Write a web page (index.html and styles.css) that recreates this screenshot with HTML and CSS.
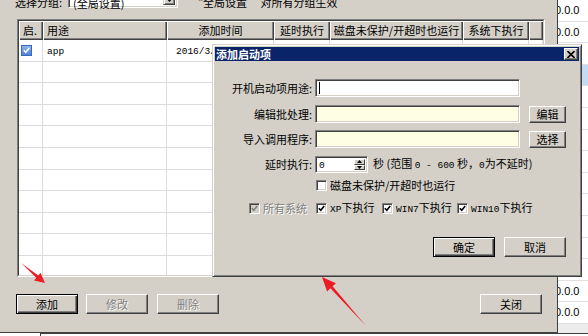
FILE: index.html
```html
<!DOCTYPE html>
<html lang="zh-CN">
<head>
  <meta charset="UTF-8" />
  <meta name="viewport" content="width=device-width, initial-scale=1.0"/>
  <title>开机启动项</title>
  <link rel="stylesheet" href="styles.css">
</head>
<body>
  <div class="desk">
    <div class="main">
      <div class="group-row">
        <span class="group-label">选择分组:</span>
        <div class="combo">
          <span class="combo-text">(全局设置)</span>
          <span class="combo-btn"><svg width="7" height="4" viewBox="0 0 7 4"><path d="M0 0h7L3.5 4z"/></svg></span>
        </div>
        <span class="group-note">“全局设置” 对所有分组生效</span>
      </div>

      <div class="list">
        <div class="list-in">
          <table class="grid">
            <colgroup>
              <col style="width:24px"><col style="width:124px"><col style="width:107px"><col style="width:56px"><col style="width:133px"><col style="width:66px"><col style="width:14px">
            </colgroup>
            <thead>
              <tr><th class="left">启.</th><th class="left">用途</th><th>添加时间</th><th>延时执行</th><th>磁盘未保护/开超时也运行</th><th>系统下执行</th><th></th></tr>
            </thead>
            <tbody>
              <tr>
                <td class="first"><span class="xpcheck"><svg width="7" height="7" viewBox="0 0 7 7"><path d="M0.8 3.2L2.8 5.2L6.2 1" fill="none" stroke="#fff" stroke-width="1.6"/></svg></span></td>
                <td><span class="en">app</span></td>
                <td class="date"><span class="en">2016/3/</span></td>
                <td></td><td></td><td></td><td></td>
              </tr>
              <tr><td></td><td></td><td></td><td></td><td></td><td></td><td></td></tr>
              <tr><td></td><td></td><td></td><td></td><td></td><td></td><td></td></tr>
              <tr><td></td><td></td><td></td><td></td><td></td><td></td><td></td></tr>
              <tr><td></td><td></td><td></td><td></td><td></td><td></td><td></td></tr>
              <tr><td></td><td></td><td></td><td></td><td></td><td></td><td></td></tr>
              <tr><td></td><td></td><td></td><td></td><td></td><td></td><td></td></tr>
              <tr><td></td><td></td><td></td><td></td><td></td><td></td><td></td></tr>
              <tr><td></td><td></td><td></td><td></td><td></td><td></td><td></td></tr>
              <tr><td></td><td></td><td></td><td></td><td></td><td></td><td></td></tr>
              <tr><td></td><td></td><td></td><td></td><td></td><td></td><td></td></tr>
            </tbody>
          </table>
        </div>
      </div>

      <div class="bottom-bar">
        <button class="btn default add">添加</button>
        <button class="btn edit" disabled>修改</button>
        <button class="btn del" disabled>删除</button>
        <button class="btn close-main">关闭</button>
      </div>
    </div>

    <div class="side">
      <div class="side-row">0.0.0</div>
      <div class="side-row">0.0.0</div>
      <div class="side-row"></div>
      <div class="side-row sel"></div>
      <div class="side-row"></div>
      <div class="side-row"></div>
      <div class="side-row"></div>
      <div class="side-row"></div>
      <div class="side-row"></div>
      <div class="side-row"></div>
      <div class="side-row"></div>
      <div class="side-row"></div>
      <div class="side-row"></div>
      <div class="side-row">0.0.0</div>
      <div class="side-row">0.0.0</div>
      <div class="side-row last"></div>
    </div>
  </div>
  <div class="strip"><span class="strip-left"></span><span class="strip-right"></span></div>

  <!-- 添加启动项 dialog -->
  <div class="dialog">
    <div class="titlebar">
      <span class="title">添加启动项</span>
      <span class="xbtn"><svg width="8" height="7" viewBox="0 0 8 7"><path d="M0.5 0L7.5 7M7.5 0L0.5 7" stroke="#000" stroke-width="1.6"/></svg></span>
    </div>
    <div class="form">
      <div class="row r1">
        <span class="lbl">开机启动项用途:</span>
        <div class="field"><i class="caret"></i></div>
      </div>
      <div class="row r2">
        <span class="lbl">编辑批处理:</span>
        <div class="field yellow"></div>
        <button class="btn small">编辑</button>
      </div>
      <div class="row r3">
        <span class="lbl">导入调用程序:</span>
        <div class="field yellow"></div>
        <button class="btn small">选择</button>
      </div>
      <div class="row r4">
        <span class="lbl">延时执行:</span>
        <div class="spin">
          <span class="en spin-val">0</span>
          <span class="spin-btns">
            <b><svg width="5" height="3" viewBox="0 0 5 3"><path d="M2.5 0L5 3H0z"/></svg></b>
            <b><svg width="5" height="3" viewBox="0 0 5 3"><path d="M0 0h5L2.5 3z"/></svg></b>
          </span>
        </div>
        <span class="hint">秒 (范围 <span class="en">0 - 600</span> 秒，<span class="en">0</span>为不延时)</span>
      </div>
      <div class="row r5">
        <span class="lbl"></span>
        <label class="chk first-chk"><span class="box"></span><span>磁盘未保护/开超时也运行</span></label>
      </div>
      <div class="row r6">
        <span class="lbl">
          <label class="chk off"><span class="box"><svg width="7" height="7" viewBox="0 0 7 7"><path d="M0.8 3.2L2.8 5.2L6.2 1" fill="none" stroke="#808080" stroke-width="1.6"/></svg></span><span>所有系统</span></label>
        </span>
        <label class="chk xp"><span class="box"><svg width="7" height="7" viewBox="0 0 7 7"><path d="M0.8 3.2L2.8 5.2L6.2 1" fill="none" stroke="#000" stroke-width="1.6"/></svg></span><span><span class="en">XP</span>下执行</span></label>
        <label class="chk w7"><span class="box"><svg width="7" height="7" viewBox="0 0 7 7"><path d="M0.8 3.2L2.8 5.2L6.2 1" fill="none" stroke="#000" stroke-width="1.6"/></svg></span><span><span class="en">WIN7</span>下执行</span></label>
        <label class="chk w10"><span class="box"><svg width="7" height="7" viewBox="0 0 7 7"><path d="M0.8 3.2L2.8 5.2L6.2 1" fill="none" stroke="#000" stroke-width="1.6"/></svg></span><span><span class="en">WIN10</span>下执行</span></label>
      </div>
      <div class="row actions">
        <button class="btn default">确定</button>
        <button class="btn">取消</button>
      </div>
    </div>
  </div>

  <!-- red arrows drawn over the screenshot -->
  <svg class="marks" width="588" height="336" viewBox="0 0 588 336">
    <path d="M21 263L38.3 275.4L40.5 272.8L45 283L34.1 280.5L36.3 277.8Z" fill="#ec1c24"/>
    <path d="M366 326L332.6 286.3L335.9 283.2L322 277L327.1 291.4L330.4 288.3Z" fill="#ec1c24"/>
  </svg>
</body>
</html>
```

FILE: styles.css
```css
* {
  box-sizing: border-box;
}

body {
  margin: 0;
  width: 588px;
  height: 336px;
  overflow: hidden;
  position: relative;
  background: #fff;
  font-family: "Noto Sans CJK SC", sans-serif;
  font-size: 11px;
  line-height: 1;
  color: #000;
}

.en {
  font-family: "Liberation Mono", monospace;
  font-size: 9.5px;
}

.desk {
  display: flex;
  height: 333px;
}

/* main window ============================ */
.main {
  width: 558px;
  flex: none;
  background: #d4d0c8;
  border-right: 1px solid #404040;
  border-bottom: 1px solid #404040;
  padding: 0 14px 0 15px;
  display: flex;
  flex-direction: column;
}

.group-row {
  height: 20px;
  margin-top: -12px;
  display: flex;
  align-items: center;
}

.group-label {
  width: 53px;
  padding-top: 9px;
}

.combo {
  width: 110px;
  height: 20px;
  display: flex;
  background: #fff;
  border: 1px solid;
  border-color: #808080 #fff #fff #808080;
  box-shadow: inset 1px 1px #404040, inset -1px -1px #d4d0c8;
  padding: 2px;
}

.combo-text {
  flex: 1;
  padding: 7px 0 0 2px;
}

.combo-btn {
  width: 12px;
  display: flex;
  align-items: center;
  justify-content: center;
  background: #d4d0c8;
  border: 1px solid;
  border-color: #d4d0c8 #404040 #404040 #d4d0c8;
  box-shadow: inset 1px 1px #fff, inset -1px -1px #808080;
  padding-top: 4px;
}

.group-note {
  margin-left: 14px;
  padding-top: 9px;
}

.list {
  margin: 11px -2px 0 2px;
  height: 258px;
  border: 1px solid;
  border-color: #808080 #fff #fff #808080;
}

.list-in {
  height: 100%;
  border: 1px solid;
  border-color: #404040 #d4d0c8 #d4d0c8 #404040;
  background: #fff;
  overflow: hidden;
}

.grid {
  border-collapse: separate;
  border-spacing: 0;
  table-layout: fixed;
  width: 524px;
}

.grid th {
  height: 19px;
  padding: 0 2px;
  font-weight: normal;
  background: #d4d0c8;
  box-shadow: inset 1px 1px #fff, inset -1px -1px #404040, inset -2px -2px #808080;
  white-space: nowrap;
  overflow: hidden;
  text-align: center;
}

.grid th.left {
  text-align: left;
  padding-left: 4px;
}

.grid td {
  height: 21.6px;
  padding: 0 4px;
  border-right: 1px solid #dcdcdc;
  border-bottom: 1px solid #dcdcdc;
  white-space: nowrap;
  overflow: hidden;
}

.grid td.first {
  padding: 0 2px;
}

.grid td.date {
  padding-left: 9px;
}

.xpcheck {
  width: 11px;
  height: 11px;
  display: flex;
  align-items: center;
  justify-content: center;
  background: linear-gradient(#8db4ee, #4f82d8);
  border: 1px solid #3b68b8;
}

.bottom-bar {
  margin-top: 17px;
  height: 20px;
  display: flex;
}

.btn {
  width: 62px;
  height: 20px;
  padding: 0;
  font: inherit;
  color: #000;
  background: #d4d0c8;
  border: 1px solid;
  border-color: #fff #404040 #404040 #fff;
  box-shadow: inset -1px -1px #808080;
}

.btn.default {
  border-color: #000;
  box-shadow: inset 1px 1px #fff, inset -1px -1px #404040, inset -2px -2px #808080;
}

.btn:disabled {
  color: #808080;
  text-shadow: 1px 1px #fff;
}

.add { margin-left: 1px; }
.edit { margin-left: 8px; }
.del { margin-left: 9px; }
.close-main { margin-left: auto; margin-right: 1px; }

/* window behind, right edge */
.side {
  flex: 1;
  overflow: hidden;
  background: #fff;
}

.side-row {
  height: 21.6px;
  border-bottom: 1px solid #e0e0e0;
  font-family: "Liberation Sans", sans-serif;
  font-size: 11px;
  line-height: 21px;
  text-indent: -3px;
  white-space: nowrap;
  overflow: hidden;
}

.side-row.sel {
  background: #c4dbf4;
}

.side-row.last {
  background: #ececec;
}

.strip {
  height: 3px;
  display: flex;
}

.strip-left {
  width: 40px;
}

.strip-right {
  flex: 1;
  border-left: 1px solid #404040;
  background: linear-gradient(#404040 0 1px, #fff 1px);
}

/* dialog ============================ */
.dialog {
  position: absolute;
  left: 212px;
  top: 44px;
  width: 370px;
  height: 233px;
  background: #d4d0c8;
  border: 1px solid;
  border-color: #d4d0c8 #404040 #404040 #d4d0c8;
  box-shadow: inset 1px 1px #fff, inset -1px -1px #808080;
  padding: 2px;
}

.titlebar {
  height: 14px;
  background: #0a246a;
  display: flex;
  align-items: center;
  justify-content: space-between;
  padding: 0 1px;
}

.title {
  color: #fff;
  font-weight: bold;
}

.xbtn {
  width: 14px;
  height: 12px;
  display: flex;
  align-items: center;
  justify-content: center;
  background: #d4d0c8;
  border: 1px solid;
  border-color: #fff #404040 #404040 #fff;
  box-shadow: inset -1px -1px #808080;
}

.form {
  padding-top: 18px;
}

.row {
  display: flex;
  align-items: center;
}

.r1 { height: 18px; }
.r2 { height: 18px; margin-top: 8px; }
.r3 { height: 18px; margin-top: 7px; }
.r4 { height: 17px; margin-top: 8px; }
.r5 { height: 13px; margin-top: 6px; }
.r6 { height: 13px; margin-top: 10px; }

.lbl {
  width: 97px;
  flex: none;
  text-align: right;
}

.field {
  width: 205px;
  height: 18px;
  margin-left: 3px;
  display: flex;
  align-items: center;
  padding-left: 3px;
  background: #fff;
  border: 1px solid;
  border-color: #808080 #fff #fff #808080;
  box-shadow: inset 1px 1px #404040, inset -1px -1px #d4d0c8;
}

.field.yellow {
  background: #fefee4;
}

.caret {
  width: 1px;
  height: 12px;
  background: #000;
}

.btn.small {
  width: 37px;
  height: 17px;
  margin-left: 9px;
}

.spin {
  width: 53px;
  height: 17px;
  margin-left: 3px;
  display: flex;
  padding: 2px;
  background: #fff;
  border: 1px solid;
  border-color: #808080 #fff #fff #808080;
  box-shadow: inset 1px 1px #404040, inset -1px -1px #d4d0c8;
}

.spin-val {
  flex: 1;
  padding: 2px 0 0 1px;
}

.spin-btns {
  width: 11px;
  display: flex;
  flex-direction: column;
}

.spin-btns b {
  flex: 1;
  display: flex;
  align-items: center;
  justify-content: center;
  background: #d4d0c8;
  border: 1px solid;
  border-color: #fff #404040 #404040 #fff;
}

.hint {
  margin-left: 5px;
}

.chk {
  display: flex;
  align-items: center;
  gap: 3px;
}

.box {
  width: 11px;
  height: 11px;
  flex: none;
  display: flex;
  align-items: center;
  justify-content: center;
  background: #fff;
  border: 1px solid;
  border-color: #808080 #fff #fff #808080;
  box-shadow: inset 1px 1px #404040, inset -1px -1px #d4d0c8;
}

.first-chk { margin-left: 4px; }

.r6 .lbl {
  display: flex;
  justify-content: flex-end;
  padding-right: 5px;
}

.chk.off {
  color: #808080;
  text-shadow: 1px 1px #fff;
}

.chk.off .box {
  background: #d4d0c8;
}

.xp { margin-left: 4px; width: 66px; }
.w7 { width: 75px; }

.actions {
  height: 20px;
  margin-top: 22px;
  justify-content: flex-end;
  padding-right: 13px;
  gap: 9px;
}

.marks {
  position: absolute;
  left: 0;
  top: 0;
  pointer-events: none;
}
```
